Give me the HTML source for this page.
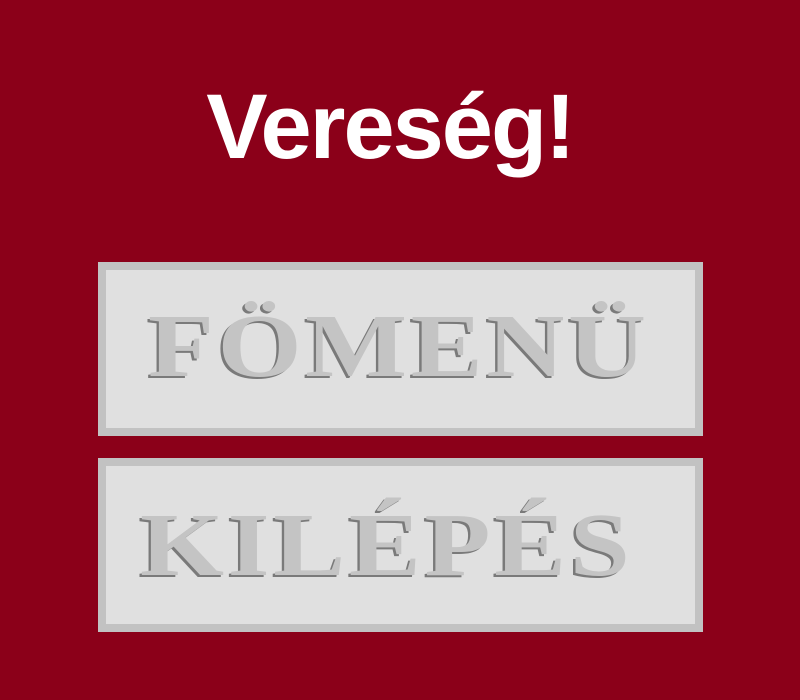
<!DOCTYPE html>
<html><head><meta charset="utf-8"><style>
html,body{margin:0;padding:0}
body{width:800px;height:700px;background:#8b0019;position:relative;overflow:hidden}
.t{position:absolute;left:0;width:780px;top:72px;text-align:center;color:#fff;font:bold 92px/110px "Liberation Sans",sans-serif;letter-spacing:-2px}
.b{position:absolute;left:98px;width:589px;height:158px;border:8px solid #c2c2c2;background:#e0e0e0}
.b span{position:absolute;white-space:nowrap;transform-origin:0 0;transform:scaleX(1.2);font:bold 90px/1 "Liberation Serif",serif;color:#c4c4c4;text-shadow:-2px 2px 0 #7a7a7a;letter-spacing:3px}
</style></head><body>
<div class="t">Vereség!</div>
<div class="b" style="top:262px"><span style="top:32px;left:42px">FÖMENÜ</span></div>
<div class="b" style="top:458px"><span style="top:35px;left:34px">KILÉPÉS</span></div>
</body></html>
